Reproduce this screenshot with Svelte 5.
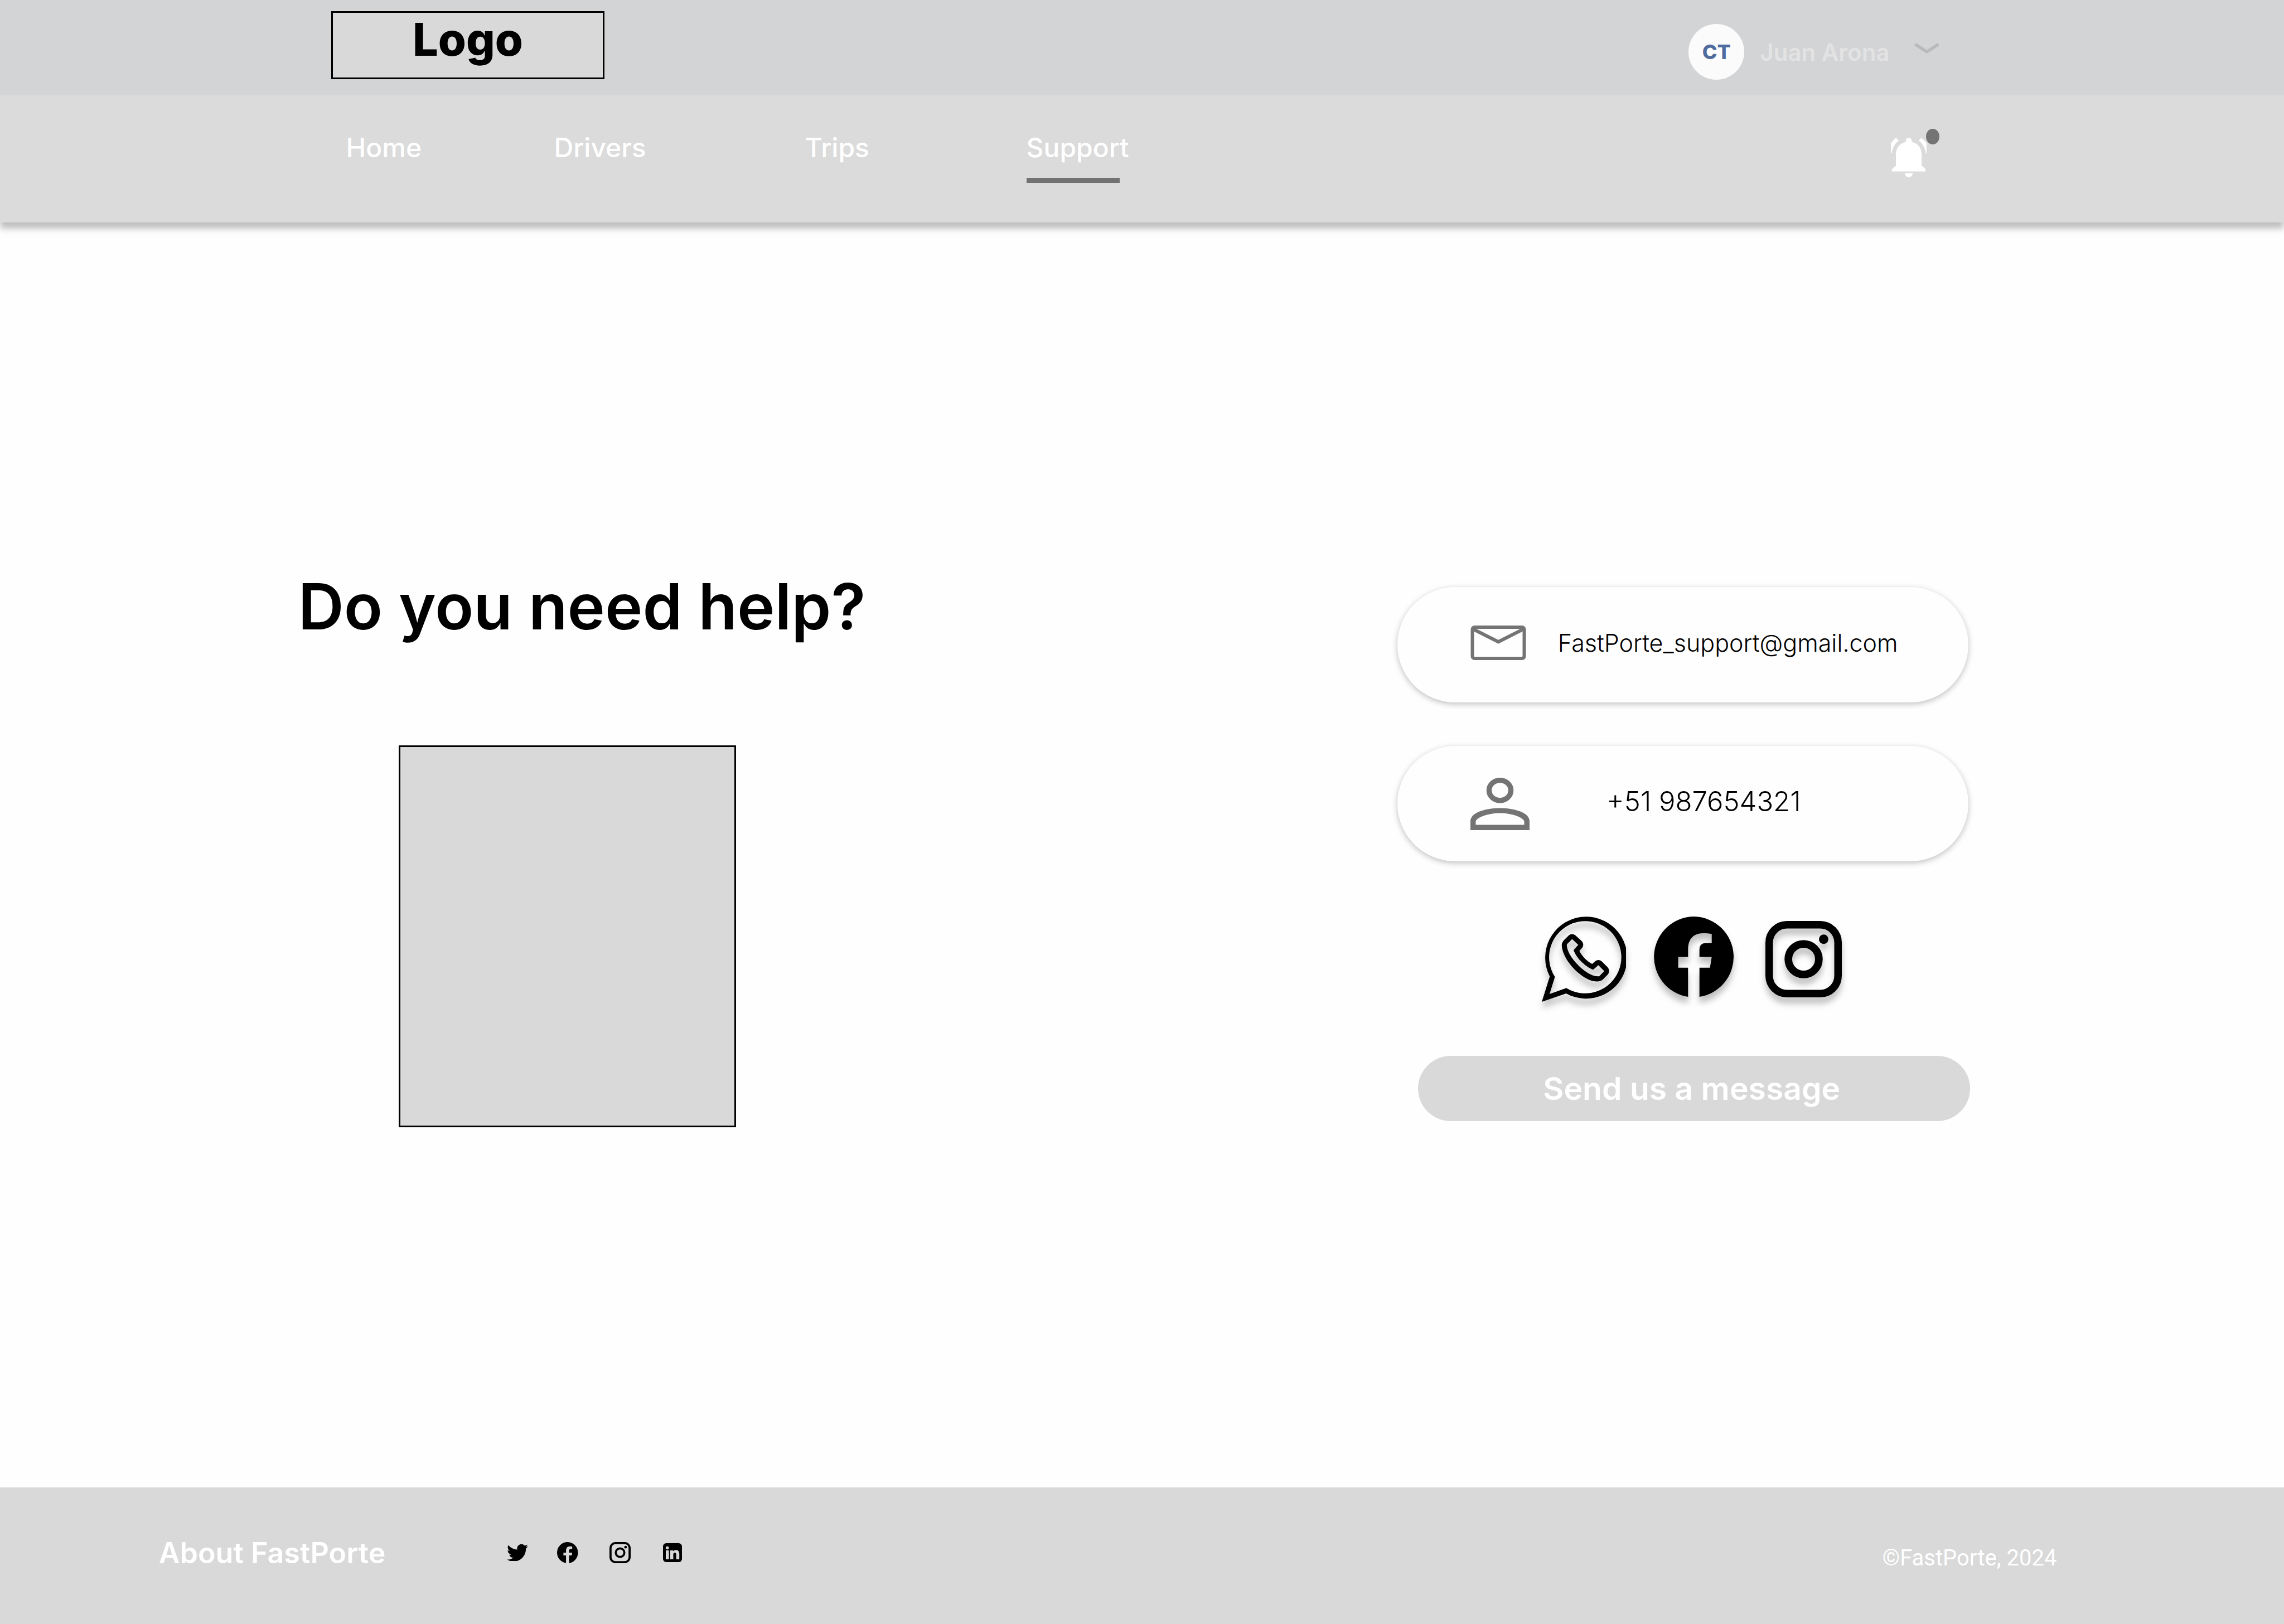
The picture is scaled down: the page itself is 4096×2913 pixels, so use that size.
<script>
  const links = [
    { label: 'Home', cls: 'home' },
    { label: 'Drivers', cls: 'drivers' },
    { label: 'Trips', cls: 'trips' },
    { label: 'Support', cls: 'support', current: true }
  ];
</script>

{#snippet facebook()}
  <svg viewBox="0 0 145 145" aria-hidden="true">
    <path d="M72.5 0A72.5 72.5 0 0 0 61.3 144.1V91.7H43.6V72.5H61.3V59C61.3 40 71 29.9 88.3 29.9C95 29.9 103.7 31 103.7 31V47.4H94C84 47.4 81.7 53 81.7 60V72.5H103.7L100.6 91.7H81.7V144.1A72.5 72.5 0 0 0 72.5 0Z" />
  </svg>
{/snippet}

<div class="page">
  <header>
    <div class="topbar">
      <a class="logo" href="#home">Logo</a>
      <button class="account" type="button">
        <span class="avatar">CT</span>
        <span class="name">Juan Arona</span>
        <svg class="chevron" viewBox="0 0 45 20" aria-hidden="true">
          <path d="M1.6 2.4L22.5 16L43.4 2.4" fill="none" stroke="#bababa" stroke-width="5.6" />
        </svg>
      </button>
    </div>
    <div class="navbar">
      <nav aria-label="Main">
        {#each links as link}
          <a class={link.cls} href="#{link.cls}" aria-current={link.current ? 'page' : undefined}>{link.label}</a>
        {/each}
      </nav>
      <button class="bell" type="button" aria-label="Notifications">
        <svg viewBox="0 0 64 71" aria-hidden="true">
          <path d="M26.8 5.3A5.3 5.3 0 0 1 37.4 5.3V7.6C48 10 55.1 18.5 55.1 29.4V49.8L62.2 56.4V60.4H1.8V56.4L9.1 49.8V29.4C9.1 18.5 16 10 26.8 7.6Z" />
          <path d="M24.7 63.4H39.3A7.3 7.6 0 0 1 24.7 63.4Z" />
          <path d="M9.4.3L14.1 5.2C7 10.5 2.4 18.5 1.5 28H0V10.5C2.4 6.6 5.6 3.2 9.4.3Z" />
          <path d="M54.6.3L49.9 5.2C57 10.5 61.6 18.5 62.5 28H64V10.5C61.6 6.6 58.4 3.2 54.6.3Z" />
        </svg>
        <span class="dot"></span>
      </button>
    </div>
  </header>

  <main>
    <section class="intro">
      <h1>Do you need help?</h1>
      <div class="picture"></div>
    </section>

    <section class="contact" aria-label="Contact">
      <a class="card mail" href="mailto:FastPorte_support@gmail.com">
        <svg viewBox="0 0 100 62" aria-hidden="true">
          <rect x="3.5" y="3" width="93" height="56" rx="4" />
          <path d="M5 6.5L50 29.3L95 6.5" />
        </svg>
        <span>FastPorte_support@gmail.com</span>
      </a>
      <a class="card phone" href="tel:+51987654321">
        <svg viewBox="0 0 106 94" aria-hidden="true">
          <ellipse cx="53" cy="22.7" rx="19.6" ry="18.1" fill="none" stroke="#747474" stroke-width="9.4" />
          <path fill="#747474" fill-rule="evenodd" d="M0 94V78C0 62 28 54.5 53 54.5S106 62 106 78V94ZM9.5 84.6H96.5V79C96.5 72 75 63.6 53 63.6S9.5 72 9.5 79Z" />
        </svg>
        <span>+51 987654321</span>
      </a>
      <div class="social">
        <a class="whatsapp" href="#whatsapp" aria-label="WhatsApp">
          <svg viewBox="0 0 151 153" aria-hidden="true">
            <path fill-rule="evenodd" d="M14.3 107.6A73.5 73.5 0 1 1 43.6 137.9L0 152.9ZM23.5 108.3L13.9 138.9L43.9 128.2A64.8 64.8 0 1 0 23.5 108.3Z" />
            <path fill-rule="evenodd" d="M49 33.2Q54.3 29.5 60 33.5L72 44.5Q76.5 50.7 72 56.5L67.3 61.4C71.5 70.5 80.5 79.5 90.3 85.1L96 80Q101.4 75.8 107 80L118.8 91.8Q122.5 97.6 118.8 103.5L110.4 111.9Q106 116.4 98.6 116.4C73 116.4 35.8 77 35.8 50.7Q36 46.5 40 42ZM54.3 40.5L65.4 50.7L56.9 60.2C62 74 77 89.5 92.2 95.3L101.4 87.2L112.1 97.9L103.1 106.9Q101.5 107.3 98.6 107.1C79 105.5 44.8 72 44.8 50.7L45.8 49Z" />
          </svg>
        </a>
        <a class="facebook" href="#facebook" aria-label="Facebook">{@render facebook()}</a>
        <a class="instagram" href="#instagram" aria-label="Instagram">
          <svg viewBox="0 0 137 137" aria-hidden="true">
            <rect x="6.75" y="6.75" width="123.5" height="123.5" rx="32" fill="none" stroke="#000" stroke-width="13.5" />
            <circle cx="68.5" cy="68.5" r="27.4" fill="none" stroke="#000" stroke-width="13.7" />
            <circle cx="104.5" cy="32.8" r="8.5" />
          </svg>
        </a>
      </div>
      <button class="send" type="button">Send us a message</button>
    </section>
  </main>

  <footer>
    <a class="about" href="#about">About FastPorte</a>
    <div class="links">
      <a class="tw" href="#twitter" aria-label="Twitter">
        <svg viewBox="2 4 20 16" aria-hidden="true">
          <path d="M22 5.9c-.74.33-1.53.55-2.36.65a4.1 4.1 0 0 0 1.8-2.27c-.79.47-1.67.81-2.6 1a4.1 4.1 0 0 0-7 3.74A11.65 11.65 0 0 1 3.39 4.73a4.1 4.1 0 0 0 1.27 5.48 4.1 4.1 0 0 1-1.86-.51v.05a4.1 4.1 0 0 0 3.29 4.02 4.1 4.1 0 0 1-1.85.07 4.1 4.1 0 0 0 3.83 2.85A8.23 8.23 0 0 1 2 18.39 11.6 11.6 0 0 0 8.29 20.2c7.55 0 11.68-6.25 11.68-11.67l-.01-.53A8.35 8.35 0 0 0 22 5.9z" />
        </svg>
      </a>
      <a href="#facebook" aria-label="Facebook">{@render facebook()}</a>
      <a href="#instagram" aria-label="Instagram">
        <svg viewBox="0 0 38 38" aria-hidden="true">
          <rect x="1.9" y="1.9" width="34.2" height="34.2" rx="8.8" fill="none" stroke="#000" stroke-width="3.8" />
          <circle cx="19" cy="19" r="7.7" fill="none" stroke="#000" stroke-width="3.7" />
          <circle cx="28.9" cy="9.2" r="2.4" />
        </svg>
      </a>
      <a class="in" href="#linkedin" aria-label="LinkedIn">
        <svg viewBox="0 0 142 142" aria-hidden="true">
          <rect width="142" height="142" rx="24" />
          <g fill="#d9d9d9">
            <circle cx="32" cy="35" r="11.5" />
            <rect x="21" y="54" width="23" height="67" />
            <path d="M54 54H76V62C80 55 87 51 97 51C113 51 122 62 122 80V121H99V84C99 75 95 71 88.5 71C81 71 77 76 77 85V121H54Z" />
          </g>
        </svg>
      </a>
    </div>
    <small>©FastPorte, 2024</small>
  </footer>
</div>

<style>
  :global(body) {
    margin: 0;
    background: #fefefe;
  }

  .page {
    display: flex;
    flex-direction: column;
    min-height: 100vh;
    font-family: Inter, 'Liberation Sans', sans-serif;
    color: #000;
  }

  .page :global(svg) {
    display: block;
    width: 100%;
    height: auto;
  }

  a {
    color: inherit;
    text-decoration: none;
  }

  button {
    border: 0;
    padding: 0;
    background: none;
    font: inherit;
    cursor: pointer;
  }

  header {
    box-shadow: 0 11px 11px rgba(0, 0, 0, 0.25);
  }

  .topbar,
  .navbar {
    display: flex;
    justify-content: space-between;
    align-items: flex-start;
    padding-right: 15.1%;
  }

  .topbar {
    height: 171px;
    padding-left: 14.5%;
    background: #d3d4d6;
    box-sizing: border-box;
  }

  .logo {
    box-sizing: border-box;
    width: 490px;
    height: 122px;
    margin-top: 20px;
    border: 3px solid #000;
    background: #d9d9d9;
    font-size: 81px;
    font-weight: 800;
    line-height: 96px;
    text-align: center;
  }

  .account {
    display: flex;
    align-items: center;
    height: 100px;
    margin-top: 43px;
  }

  .avatar {
    width: 100px;
    margin-right: 28px;
    border-radius: 50%;
    background: #fbfbfb;
    color: #506b9d;
    font-size: 36px;
    font-weight: 800;
    line-height: 100px;
    text-align: center;
  }

  .name {
    color: #e3e3e3;
    font-size: 42px;
    font-weight: 600;
  }

  .account .chevron {
    width: 45px;
    margin: 0 0 12px 44px;
  }

  .navbar {
    height: 228px;
    padding-left: 15.15%;
    background: #dbdbdb;
    box-sizing: border-box;
  }

  nav {
    display: flex;
    padding-top: 65px;
    color: #fff;
    font-size: 48px;
    font-weight: 500;
    line-height: 58px;
  }

  .home {
    width: 373px;
  }

  .drivers {
    width: 450px;
  }

  .trips {
    width: 397px;
  }

  nav a[aria-current]::after {
    content: '';
    display: block;
    width: 167px;
    height: 9px;
    margin-top: 25px;
    background: #727272;
  }

  .bell {
    position: relative;
    width: 64px;
    margin: 76px 23px 0 0;
    fill: #fff;
  }

  .dot {
    position: absolute;
    top: -16px;
    left: 63px;
    width: 24px;
    height: 28px;
    border-radius: 50%;
    background: #747474;
  }

  main {
    flex: 1;
    display: flex;
    justify-content: space-between;
    align-items: flex-start;
    padding: 620px 13.75% 0 13.05%;
  }

  h1 {
    margin: 0;
    font-size: 114px;
    font-weight: 600;
    line-height: 138px;
  }

  .picture {
    box-sizing: border-box;
    width: 605px;
    height: 685px;
    margin: 180px 0 0 180px;
    border: 3px solid #000;
    background: #d9d9d9;
  }

  .contact {
    width: 1027px;
    padding-top: 34px;
  }

  .card {
    box-sizing: border-box;
    display: flex;
    align-items: center;
    width: 1024px;
    height: 207px;
    margin-bottom: 78px;
    padding-left: 131px;
    border-radius: 104px;
    background: #fefefe;
    box-shadow: 0 3px 11px rgba(0, 0, 0, 0.25);
    font-weight: 300;
  }

  .card span {
    margin-bottom: 8px;
  }

  .mail {
    gap: 57px;
    font-size: 43px;
  }

  .mail svg {
    width: 100px;
    margin-bottom: 8px;
    fill: none;
    stroke: #747474;
    stroke-width: 6;
  }

  .phone {
    gap: 138px;
    font-size: 49px;
  }

  .phone svg {
    width: 106px;
  }

  .social {
    display: flex;
    margin: 99px 0 0 259px;
  }

  .social a {
    filter: drop-shadow(0 11px 6px rgba(0, 0, 0, 0.25));
  }

  .whatsapp {
    width: 151px;
  }

  .facebook {
    width: 145px;
    margin: 0 55px 0 50px;
  }

  .instagram {
    width: 137px;
    margin-top: 8px;
  }

  .send {
    display: block;
    width: 990px;
    height: 117px;
    margin: 97px 0 0 37px;
    padding-right: 8px;
    border-radius: 59px;
    background: #d9d9d9;
    color: #fff;
    font-size: 57px;
    font-weight: 600;
  }

  footer {
    box-sizing: border-box;
    display: flex;
    align-items: flex-start;
    height: 245px;
    padding: 87px 10% 0 6.95%;
    background: #d9d9d9;
  }

  .about {
    color: #fff;
    font-size: 52px;
    font-weight: 600;
    line-height: 62px;
  }

  .links {
    display: flex;
    align-items: center;
    margin: 11px 0 0 218px;
    gap: 56px;
  }

  .links a {
    width: 38px;
  }

  .links .tw {
    margin-right: -4px;
  }

  .links .in {
    width: 34px;
    margin-left: 2px;
  }

  small {
    margin: 16px -2px 0 auto;
    color: #fff;
    font-family: Roboto, sans-serif;
    font-size: 40px;
    line-height: 48px;
  }
</style>
